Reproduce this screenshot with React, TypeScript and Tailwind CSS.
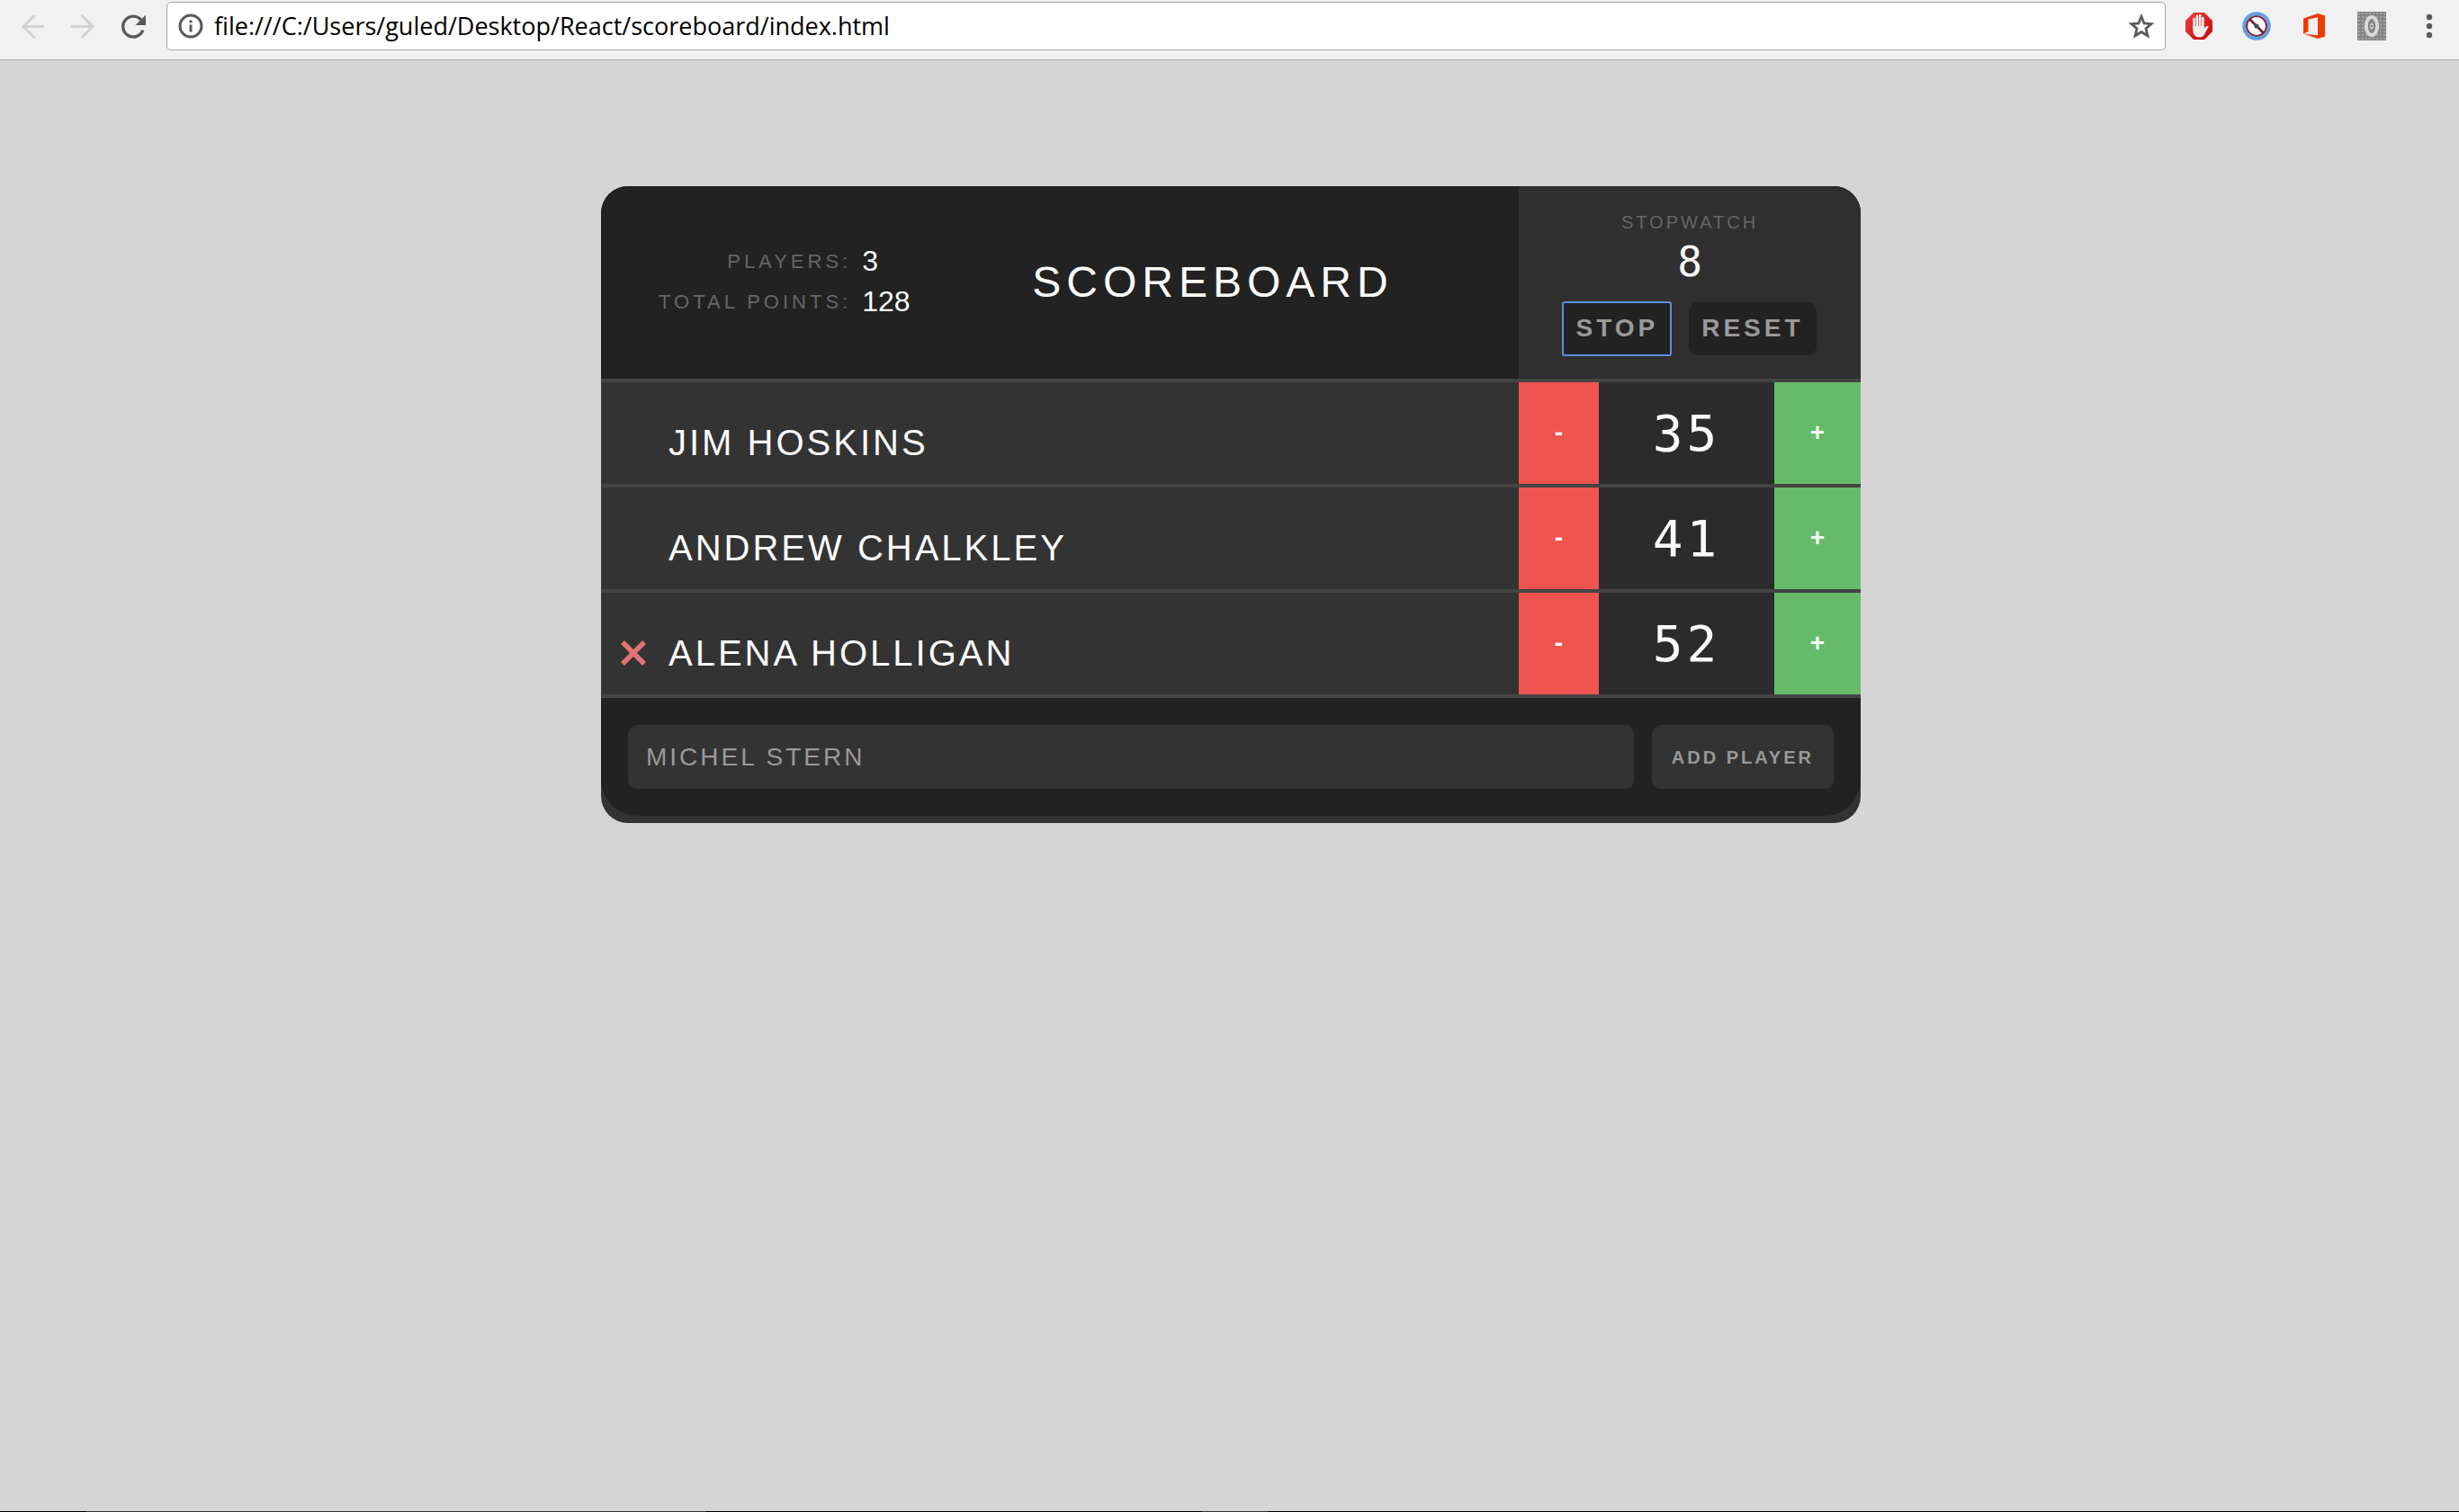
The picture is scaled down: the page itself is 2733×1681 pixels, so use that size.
import type { ReactNode } from "react";

type Player = { name: string; score: number; removable?: boolean };

const players: Player[] = [
  { name: "Jim Hoskins", score: 35 },
  { name: "Andrew Chalkley", score: 41 },
  { name: "Alena Holligan", score: 52, removable: true },
];

function BackIcon() {
  return (
    <svg viewBox="0 0 32 32" className="size-8" fill="none" stroke="#d2d2d2" strokeWidth="3">
      <path d="M18.5 4 6 16.5 18.5 29M5 16.5h24" />
    </svg>
  );
}

function ForwardIcon() {
  return (
    <svg viewBox="0 0 32 32" className="size-8" fill="none" stroke="#d2d2d2" strokeWidth="3">
      <path d="M14.5 4 27 16.5 14.5 29M3 16.5h25" />
    </svg>
  );
}

function ReloadIcon() {
  return (
    <svg viewBox="0 0 32 32" className="size-8">
      <path d="M24.8 9.2A11.4 11.4 0 1 0 26.8 20.5" fill="none" stroke="#5a5a5a" strokeWidth="3.4" />
      <path d="M30 3.500V15H18.500z" fill="#5a5a5a" />
    </svg>
  );
}

function InfoIcon() {
  return (
    <svg viewBox="0 0 28 28" className="size-7 shrink-0">
      <circle cx="14" cy="14" r="12" fill="none" stroke="#5a5a5a" strokeWidth="3" />
      <path d="M12.500 7.500h3v3h-3zM12.500 12.500h3v8h-3z" fill="#5a5a5a" />
    </svg>
  );
}

function StarIcon() {
  return (
    <svg viewBox="0 0 32 32" className="size-8" fill="none" stroke="#5a5a5a" strokeWidth="2.800">
      <path d="M16 5.500 19.100 13 27 13.600 21 18.800 22.900 26.800 16 22.500 9.100 26.800 11 18.800 5 13.600 12.900 13z" />
    </svg>
  );
}

function HandIcon() {
  return (
    <svg viewBox="0 0 32 32" className="size-8">
      <defs>
        <linearGradient id="stopRed" x1="0" y1="0" x2="1" y2="1">
          <stop offset="0" stopColor="#f0423c" />
          <stop offset="1" stopColor="#c00508" />
        </linearGradient>
      </defs>
      <path d="M10 1h12l9 9v12l-9 9H10l-9-9V10z" fill="url(#stopRed)" />
      <g stroke="#f3f0ee" strokeWidth="2.600" strokeLinecap="round" fill="none">
        <path d="M10.600 8v10M13.900 5v12M17.200 4v13M20.400 7v11" />
      </g>
      <path d="M9.300 16h12.400v3c1-2 2.500-3.500 4.300-3.200.8.2.6.9.3 1.500l-3.900 7.200c-1.300 2.600-2.700 4-5.500 4-5 0-7.600-3-7.600-8z" fill="#f0eeec" />
    </svg>
  );
}

function NoEntryIcon() {
  return (
    <svg viewBox="0 0 32 32" className="size-8" fill="none">
      <circle cx="16" cy="16" r="14" fill="#fff" stroke="#5b9fe8" strokeWidth="3.500" />
      <circle cx="16" cy="16" r="11" stroke="#7d3040" strokeWidth="2.200" />
      <path d="M8.500 8.500l15 15" stroke="#6b2028" strokeWidth="2.600" />
      <circle cx="16" cy="16" r="2.600" fill="#4a4a60" />
    </svg>
  );
}

function OfficeIcon() {
  return (
    <svg viewBox="0 0 32 32" className="size-8">
      <path d="M4 7.500 20 2l8 2.300v23.400L20 30 4 24.500l16 1.800V6.300l-10.500 2.300v13.700L4 24.500z" fill="#eb3c00" />
    </svg>
  );
}

function ZeroIcon() {
  return (
    <svg viewBox="0 0 32 32" className="size-8">
      <defs>
        <pattern id="weave" width="4" height="4" patternUnits="userSpaceOnUse">
          <rect width="4" height="4" fill="#858585" />
          <rect x="1" y="1" width="2" height="2" fill="#a3a3a3" />
        </pattern>
      </defs>
      <rect width="32" height="32" fill="url(#weave)" />
      <ellipse cx="16" cy="16" rx="6.200" ry="10" fill="#858585" stroke="#dadada" strokeWidth="4" />
      <ellipse cx="16" cy="16" rx="2" ry="3.500" fill="#d4d4d4" />
      <circle cx="16" cy="16" r="1.300" fill="#777" />
    </svg>
  );
}

function MenuIcon() {
  return (
    <svg viewBox="0 0 32 32" className="size-8" fill="#5a5a5a">
      <circle cx="16" cy="6" r="3.200" />
      <circle cx="16" cy="16" r="3.200" />
      <circle cx="16" cy="26" r="3.200" />
    </svg>
  );
}

function BarButton({ label, wide, children }: { label: string; wide?: boolean; children: ReactNode }) {
  return (
    <button type="button" aria-label={label} className={wide ? "flex w-16 justify-center" : "flex w-14 justify-center"}>
      {children}
    </button>
  );
}

function BrowserBar() {
  return (
    <header className="flex h-[67px] items-start border-b border-[#aeaeae] bg-[#f1f1f1] pt-[2px] pr-px pl-2">
      <nav aria-label="Browser" className="flex h-[54px] items-center">
        <BarButton label="Back"><BackIcon /></BarButton>
        <BarButton label="Forward"><ForwardIcon /></BarButton>
        <BarButton label="Reload"><ReloadIcon /></BarButton>
      </nav>
      <div className="ml-[9px] flex h-[54px] flex-1 items-center rounded-[5px] border border-[#a6a6a6] bg-white pr-[10px] pl-3">
        <InfoIcon />
        <input
          aria-label="Address"
          type="text"
          defaultValue="file:///C:/Users/guled/Desktop/React/scoreboard/index.html"
          className="ml-3 min-w-0 flex-1 bg-transparent font-['Open_Sans','Noto_Sans',sans-serif] text-[27px] leading-9 text-black outline-none"
        />
        <button type="button" aria-label="Bookmark" className="shrink-0"><StarIcon /></button>
      </div>
      <div className="ml-[5px] flex h-[54px] items-center">
        <BarButton wide label="Ad blocker"><HandIcon /></BarButton>
        <BarButton wide label="Script blocker"><NoEntryIcon /></BarButton>
        <BarButton wide label="Office"><OfficeIcon /></BarButton>
        <BarButton wide label="Counter"><ZeroIcon /></BarButton>
        <BarButton wide label="Menu"><MenuIcon /></BarButton>
      </div>
    </header>
  );
}

function Stats() {
  const total = players.reduce((sum, p) => sum + p.score, 0);
  const rows: [string, number][] = [["Players:", players.length], ["Total Points:", total]];
  return (
    <div className="w-[340px] pb-[2px] pl-16">
      <table>
        <tbody>
          {rows.map(([label, value]) => (
            <tr key={label}>
              <th scope="row" className="p-0 text-right align-middle text-[22px] leading-[45px] font-normal tracking-[4px] whitespace-nowrap text-[#666] uppercase">{label}</th>
              <td className="p-0 pl-3 align-middle text-[32px] leading-[45px]">{value}</td>
            </tr>
          ))}
        </tbody>
      </table>
    </div>
  );
}

function Stopwatch() {
  return (
    <section aria-label="Stopwatch" className="flex w-[380px] flex-col items-center bg-[#2f2f2f] pt-7">
      <h2 className="text-[20px] leading-6 tracking-[3px] text-[#666]">STOPWATCH</h2>
      <div className="font-['DejaVu_Sans_Mono',monospace] text-[46px] leading-[64px]">8</div>
      <div className="mt-[13px] flex gap-5">
        <button type="button" className="h-[59px] rounded-[2px] bg-[#222] px-[14px] pb-[2px] text-[28px] leading-8 font-bold tracking-[4px] text-[#999] shadow-[inset_0_0_4px_#10307a] outline-2 -outline-offset-1 outline-[#5e8fd6]">STOP</button>
        <button type="button" className="h-[59px] rounded-[10px] bg-[#222] px-[14px] pb-[2px] text-[28px] leading-8 font-bold tracking-[4px] text-[#999]">RESET</button>
      </div>
    </section>
  );
}

function PlayerRow({ player }: { player: Player }) {
  return (
    <li className="flex h-[117px] border-b-4 border-[#444]">
      <div className="flex flex-1 items-center pt-[34px] pb-[13px]">
        <div className="flex w-[75px] justify-center pr-[3px]">
          {player.removable && (
            <button type="button" aria-label={"Remove " + player.name}>
              <svg viewBox="0 0 28 28" className="size-7" stroke="#e57373" strokeWidth="5.500">
                <path d="M2 2l24 24M26 2L2 26" />
              </svg>
            </button>
          )}
        </div>
        <span className="text-[40px] leading-[46px] tracking-[3px] uppercase">{player.name}</span>
      </div>
      <button type="button" aria-label={"Take a point from " + player.name} className="w-[89px] bg-[#ef5350] pb-[2px] text-[28px] leading-8 font-bold">-</button>
      <div className="flex w-[195px] items-center justify-center bg-[#2b2b2b] font-['DejaVu_Sans_Mono',monospace] text-[56px] leading-[64px] tracking-[4px]">{player.score}</div>
      <button type="button" aria-label={"Give a point to " + player.name} className="w-[96px] bg-[#66bb6a] pb-[2px] text-[28px] leading-8 font-bold">+</button>
    </li>
  );
}

export default function App() {
  return (
    <div className="flex min-h-screen flex-col bg-[#d5d5d5] font-['Liberation_Sans',Arial,sans-serif]">
      <BrowserBar />
      <main className="flex flex-1 flex-col items-center pt-[140px] pl-[3px]">
        <div className="w-full max-w-[1400px] overflow-hidden rounded-[30px] bg-[#333] pb-2 text-[#fafafa]">
          <div className="flex h-[218px] border-b-4 border-[#444] bg-[#222]">
            <div className="flex flex-1 items-center">
              <Stats />
              <h1 className="flex-1 text-center text-[48px] leading-[56px] tracking-[6px]">SCOREBOARD</h1>
            </div>
            <Stopwatch />
          </div>
          <ul>
            {players.map((p) => <PlayerRow key={p.name} player={p} />)}
          </ul>
          <form className="flex gap-5 rounded-b-[40px] bg-[#222] p-[30px]">
            <input
              aria-label="Player name"
              type="text"
              defaultValue="Michel Stern"
              className="h-[71px] min-w-0 flex-1 rounded-[10px] bg-[#333] px-5 text-[28px] leading-8 tracking-[3px] text-[#999] uppercase outline-none"
            />
            <button type="button" className="h-[71px] rounded-[10px] bg-[#333] px-[22px] text-[20px] leading-6 font-bold tracking-[3px] whitespace-nowrap text-[#999]">ADD PLAYER</button>
          </form>
        </div>
      </main>
      <footer className="flex h-px bg-black pl-24">
        <div className="w-[688px] bg-[#333]" />
        <div className="ml-[552px] w-[73px] bg-[#333]" />
      </footer>
    </div>
  );
}
